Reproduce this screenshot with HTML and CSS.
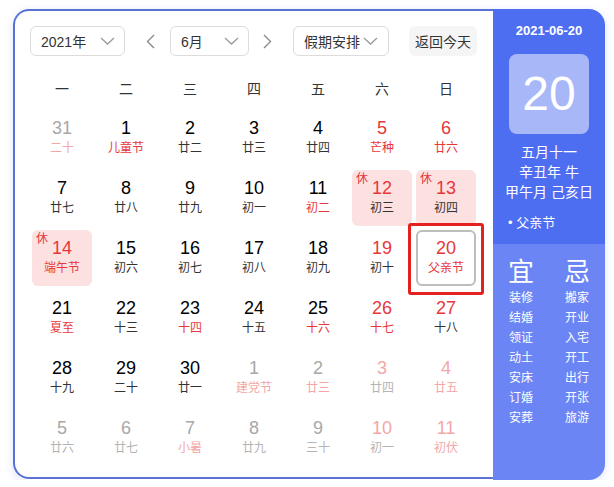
FILE: index.html
```html
<!DOCTYPE html>
<html lang="zh-CN">
<head>
<meta charset="utf-8">
<title>万年历</title>
<link rel="stylesheet" href="styles.css">
</head>
<body>
<div class="wrap">
  <div class="cal">
    <div class="main">
      <div class="controls">
        <div class="select sel-year"><span>2021年</span><svg class="caret" width="15" height="8" viewBox="0 0 15 8"><path d="M1 1 L7.5 7 L14 1" fill="none" stroke="#9a9a9a" stroke-width="1.3"/></svg></div>
        <svg class="arrow arrow-l" width="9" height="15" viewBox="0 0 9 15"><path d="M8 1 L1.5 7.5 L8 14" fill="none" stroke="#8a8a8a" stroke-width="1.4"/></svg>
        <div class="select sel-month"><span>6月</span><svg class="caret" width="15" height="8" viewBox="0 0 15 8"><path d="M1 1 L7.5 7 L14 1" fill="none" stroke="#9a9a9a" stroke-width="1.3"/></svg></div>
        <svg class="arrow arrow-r" width="9" height="15" viewBox="0 0 9 15"><path d="M1 1 L7.5 7.5 L1 14" fill="none" stroke="#8a8a8a" stroke-width="1.4"/></svg>
        <div class="select sel-holiday"><span>假期安排</span><svg class="caret" width="15" height="8" viewBox="0 0 15 8"><path d="M1 1 L7.5 7 L14 1" fill="none" stroke="#9a9a9a" stroke-width="1.3"/></svg></div>
        <div class="today-btn">返回今天</div>
      </div>
      <div class="weekdays">
        <span>一</span><span>二</span><span>三</span><span>四</span><span>五</span><span>六</span><span>日</span>
      </div>
      <div class="days">
        <div class="day"><div class="box"><div class="n gray">31</div><div class="l pink">二十</div></div></div>
        <div class="day"><div class="box"><div class="n">1</div><div class="l red">儿童节</div></div></div>
        <div class="day"><div class="box"><div class="n">2</div><div class="l">廿二</div></div></div>
        <div class="day"><div class="box"><div class="n">3</div><div class="l">廿三</div></div></div>
        <div class="day"><div class="box"><div class="n">4</div><div class="l">廿四</div></div></div>
        <div class="day"><div class="box"><div class="n red">5</div><div class="l red">芒种</div></div></div>
        <div class="day"><div class="box"><div class="n red">6</div><div class="l red">廿六</div></div></div>

        <div class="day"><div class="box"><div class="n">7</div><div class="l">廿七</div></div></div>
        <div class="day"><div class="box"><div class="n">8</div><div class="l">廿八</div></div></div>
        <div class="day"><div class="box"><div class="n">9</div><div class="l">廿九</div></div></div>
        <div class="day"><div class="box"><div class="n">10</div><div class="l">初一</div></div></div>
        <div class="day"><div class="box"><div class="n">11</div><div class="l red">初二</div></div></div>
        <div class="day"><div class="box rest"><span class="xiu">休</span><div class="n red">12</div><div class="l">初三</div></div></div>
        <div class="day"><div class="box rest"><span class="xiu">休</span><div class="n red">13</div><div class="l">初四</div></div></div>

        <div class="day"><div class="box rest"><span class="xiu">休</span><div class="n red">14</div><div class="l red">端午节</div></div></div>
        <div class="day"><div class="box"><div class="n">15</div><div class="l">初六</div></div></div>
        <div class="day"><div class="box"><div class="n">16</div><div class="l">初七</div></div></div>
        <div class="day"><div class="box"><div class="n">17</div><div class="l">初八</div></div></div>
        <div class="day"><div class="box"><div class="n">18</div><div class="l">初九</div></div></div>
        <div class="day"><div class="box"><div class="n red">19</div><div class="l">初十</div></div></div>
        <div class="day today"><div class="box cur"><div class="n red">20</div><div class="l red">父亲节</div></div><div class="mark"></div></div>

        <div class="day"><div class="box"><div class="n">21</div><div class="l red">夏至</div></div></div>
        <div class="day"><div class="box"><div class="n">22</div><div class="l">十三</div></div></div>
        <div class="day"><div class="box"><div class="n">23</div><div class="l red">十四</div></div></div>
        <div class="day"><div class="box"><div class="n">24</div><div class="l">十五</div></div></div>
        <div class="day"><div class="box"><div class="n">25</div><div class="l red">十六</div></div></div>
        <div class="day"><div class="box"><div class="n red">26</div><div class="l red">十七</div></div></div>
        <div class="day"><div class="box"><div class="n red">27</div><div class="l">十八</div></div></div>

        <div class="day"><div class="box"><div class="n">28</div><div class="l">十九</div></div></div>
        <div class="day"><div class="box"><div class="n">29</div><div class="l">二十</div></div></div>
        <div class="day"><div class="box"><div class="n">30</div><div class="l">廿一</div></div></div>
        <div class="day"><div class="box"><div class="n gray">1</div><div class="l pink">建党节</div></div></div>
        <div class="day"><div class="box"><div class="n gray">2</div><div class="l pink">廿三</div></div></div>
        <div class="day"><div class="box"><div class="n pink">3</div><div class="l gray">廿四</div></div></div>
        <div class="day"><div class="box"><div class="n pink">4</div><div class="l pink">廿五</div></div></div>

        <div class="day"><div class="box"><div class="n gray">5</div><div class="l gray">廿六</div></div></div>
        <div class="day"><div class="box"><div class="n gray">6</div><div class="l gray">廿七</div></div></div>
        <div class="day"><div class="box"><div class="n gray">7</div><div class="l pink">小暑</div></div></div>
        <div class="day"><div class="box"><div class="n gray">8</div><div class="l gray">廿九</div></div></div>
        <div class="day"><div class="box"><div class="n gray">9</div><div class="l gray">三十</div></div></div>
        <div class="day"><div class="box"><div class="n pink">10</div><div class="l gray">初一</div></div></div>
        <div class="day"><div class="box"><div class="n pink">11</div><div class="l pink">初伏</div></div></div>
      </div>
    </div>
    <div class="side">
      <div class="side-top">
        <div class="date">2021-06-20</div>
        <div class="big">20</div>
        <div class="lunar">
          <div>五月十一</div>
          <div>辛丑年 牛</div>
          <div>甲午月 己亥日</div>
        </div>
        <div class="fest">• 父亲节</div>
      </div>
      <div class="side-bottom">
        <div class="col">
          <div class="head">宜</div>
          <div>装修</div><div>结婚</div><div>领证</div><div>动土</div><div>安床</div><div>订婚</div><div>安葬</div>
        </div>
        <div class="col">
          <div class="head">忌</div>
          <div>搬家</div><div>开业</div><div>入宅</div><div>开工</div><div>出行</div><div>开张</div><div>旅游</div>
        </div>
      </div>
    </div>
  </div>
</div>
</body>
</html>
```
FILE: styles.css
```css
* { box-sizing: border-box; }
body {
  margin: 0;
  background: #fff;
  font-family: "Liberation Sans", "Noto Sans CJK SC", sans-serif;
  color: #333;
}
.wrap { padding: 9px 0 0 13px; }
.cal {
  width: 592px;
  height: 471px;
  display: flex;
  border-radius: 16px;
  box-shadow: 0 2px 8px rgba(78, 110, 242, 0.18);
}
.main {
  width: 480px;
  height: 470px;
  border: 2px solid #5a72d6;
  border-right: none;
  border-radius: 16px 0 0 16px;
  padding: 15px 15px 0 15px;
}
.controls {
  display: flex;
  align-items: center;
  height: 30px;
}
.select {
  height: 30px;
  border: 1px solid #dcdcdc;
  border-radius: 6px;
  display: flex;
  align-items: center;
  justify-content: space-between;
  font-size: 14px;
  color: #333;
  padding: 0 9px 0 10px;
}
.caret { display: block; }
.sel-year { width: 95px; }
.sel-month { width: 79px; }
.sel-holiday { width: 96px; padding-right: 10px; }
.arrow { display: block; flex: none; }
.arrow-l { margin: 0 15px 0 21px; }
.arrow-r { margin: 0 21px 0 14px; }
.today-btn {
  margin-left: 20px;
  width: 68px;
  height: 30px;
  border-radius: 6px;
  background: #f5f5f6;
  font-size: 14px;
  color: #333;
  display: flex;
  align-items: center;
  justify-content: center;
}
.weekdays {
  margin-top: 12px;
  height: 40px;
  display: grid;
  grid-template-columns: repeat(7, 64px);
  align-items: center;
  justify-items: center;
  font-size: 14px;
  color: #333;
}
.days {
  display: grid;
  grid-template-columns: repeat(7, 64px);
  grid-auto-rows: 60px;
}
.day { position: relative; padding: 2px; }
.box {
  position: relative;
  width: 60px;
  height: 56px;
  border-radius: 6px;
  padding-top: 8px;
  text-align: center;
}
.box.rest { background: #fde1e1; }
.box.cur { border: 2px solid #bdbdbd; padding-top: 6px; }
.n {
  font-size: 18px;
  line-height: 20px;
  color: #000;
}
.l {
  margin-top: 1px;
  font-size: 12px;
  line-height: 16px;
  color: #333;
  font-family: "Noto Sans CJK SC", sans-serif;
}
.red { color: #e8373a; }
.pink { color: #f2a7a8; }
.n.gray { color: #a8a8a8; }
.l.gray { color: #b4b4b4; }
.xiu {
  position: absolute;
  left: 4px;
  top: 1px;
  font-size: 12px;
  line-height: 14px;
  color: #e8373a;
  font-family: "Noto Sans CJK SC", sans-serif;
}
.mark {
  position: absolute;
  left: -6px;
  top: -5px;
  width: 76px;
  height: 72px;
  border: 3px solid #e3211f;
  border-radius: 3px;
}
.side {
  width: 112px;
  height: 471px;
  border-radius: 0 16px 16px 0;
  overflow: hidden;
  display: flex;
  flex-direction: column;
  color: #fff;
  font-family: "Liberation Sans", "Noto Sans CJK SC", sans-serif;
}
.side-top {
  height: 235px;
  background: #4e6ef2;
  padding-top: 14px;
  display: flex;
  flex-direction: column;
  align-items: center;
}
.date {
  font-size: 13px;
  font-weight: bold;
  line-height: 16px;
}
.big {
  margin-top: 15px;
  width: 80px;
  height: 80px;
  border-radius: 8px;
  background: #a7b7f8;
  font-size: 48px;
  line-height: 80px;
  text-align: center;
}
.lunar {
  margin-top: 8px;
  font-size: 14px;
  line-height: 20px;
  text-align: center;
}
.fest {
  align-self: flex-start;
  margin: 13px 0 0 15px;
  font-size: 13px;
  line-height: 16px;
}
.side-bottom {
  flex: 1;
  background: #6b85f4;
  display: flex;
  padding-top: 12px;
}
.col {
  width: 56px;
  text-align: center;
  font-size: 12px;
  line-height: 20px;
}
.col .head {
  font-size: 26px;
  line-height: 32px;
  margin-bottom: 0;
}
```
